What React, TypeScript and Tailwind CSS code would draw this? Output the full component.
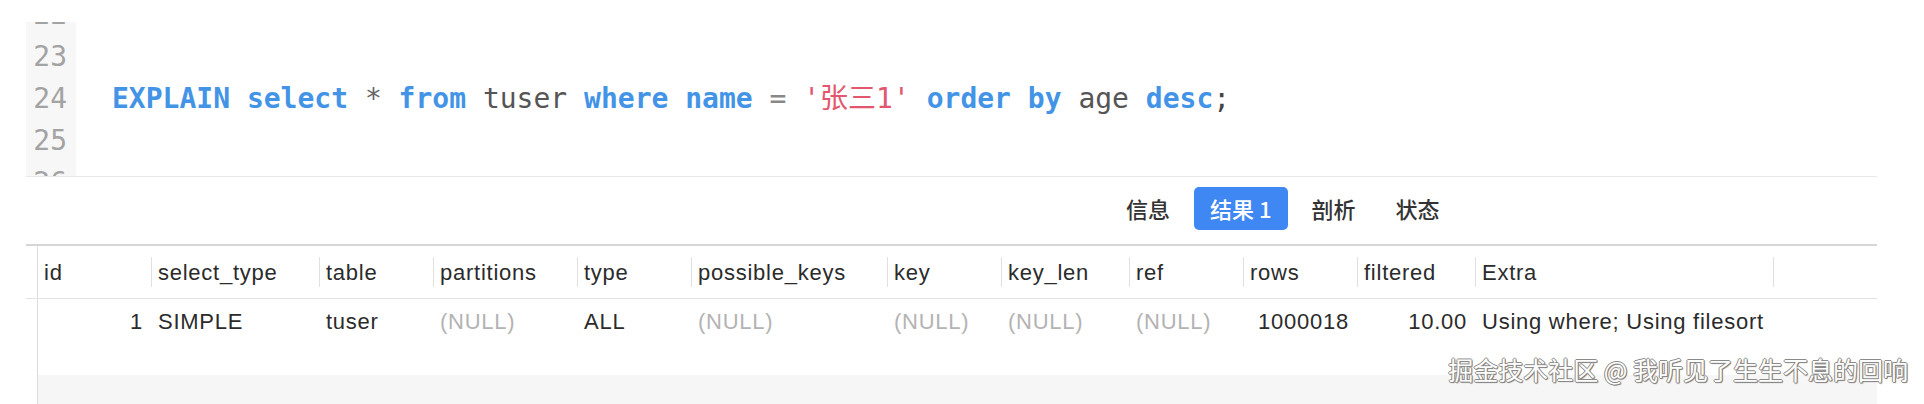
import React from 'react'

const mono = { fontFamily: '"DejaVu Sans Mono", "Noto Sans CJK SC", monospace' }

const columns = [
  { name: 'id', width: 'w-[113px]' },
  { name: 'select_type', width: 'w-[167px]' },
  { name: 'table', width: 'w-[113px]' },
  { name: 'partitions', width: 'w-[143px]' },
  { name: 'type', width: 'w-[113px]' },
  { name: 'possible_keys', width: 'w-[195px]' },
  { name: 'key', width: 'w-[113px]' },
  { name: 'key_len', width: 'w-[127px]' },
  { name: 'ref', width: 'w-[113px]' },
  { name: 'rows', width: 'w-[113px]' },
  { name: 'filtered', width: 'w-[117px]' },
  { name: 'Extra', width: 'w-[297px]' },
]

// value, right aligned, null
const row: [string, boolean, boolean][] = [
  ['1', true, false],
  ['SIMPLE', false, false],
  ['tuser', false, false],
  ['(NULL)', false, true],
  ['ALL', false, false],
  ['(NULL)', false, true],
  ['(NULL)', false, true],
  ['(NULL)', false, true],
  ['(NULL)', false, true],
  ['1000018', true, false],
  ['10.00', true, false],
  ['Using where; Using filesort', false, false],
]

function Kw({ children }: { children: React.ReactNode }) {
  return <span className="font-bold text-[#4394e6]">{children}</span>
}

function Editor() {
  return (
    <div className="flex h-[155px] overflow-hidden border-b border-[#e8e8e8]">
      {/* gutter */}
      <div className="w-[50px] bg-[#f7f7f7] pr-[9px] text-right text-[28px] leading-[42px] text-[#a3a3a3]" style={mono}>
        <div className="-mt-[28px]">
          {[22, 23, 24, 25, 26].map((n) => (
            <div key={n} className="h-[42px]">{n}</div>
          ))}
        </div>
      </div>

      {/* code */}
      <div className="flex-1 pl-[36px] text-[28px] leading-[42px] whitespace-pre text-[#555]" style={mono}>
        <div className="-mt-[28px]">
          <div className="h-[42px]" />
          <div className="h-[42px]" />
          <div className="h-[42px]">
            <Kw>EXPLAIN</Kw> <Kw>select</Kw> <span className="text-[#666]">*</span> <Kw>from</Kw> tuser{' '}
            <Kw>where</Kw> <Kw>name</Kw> <span className="text-[#888]">=</span>{' '}
            <span className="text-[#e2566e]">'张三1'</span> <Kw>order</Kw> <Kw>by</Kw> age <Kw>desc</Kw>
            <span className="text-[#444]">;</span>
          </div>
          <div className="h-[42px]" />
          <div className="h-[42px]" />
        </div>
      </div>
    </div>
  )
}

function Tabs() {
  const tabs = ['信息', '结果 1', '剖析', '状态']
  return (
    <div
      className="flex h-[69px] gap-2 border-b-2 border-[#d6d6d6] pl-[1084px] pt-[10px]"
      style={{ fontFamily: '"Noto Sans CJK SC", sans-serif' }}
    >
      {tabs.map((t, i) => (
        <div
          key={t}
          className={
            i === 1
              ? 'flex h-[43px] items-center rounded-[5px] bg-[#3f87f2] px-4 text-[22px] font-medium text-white'
              : 'flex h-[43px] items-center px-4 text-[22px] font-medium text-[#333]'
          }
        >
          {t}
        </div>
      ))}
    </div>
  )
}

function ResultTable() {
  return (
    <div className="text-[22px] tracking-[0.75px] text-[#2b2b2b]" style={{ fontFamily: '"Liberation Sans", Arial, sans-serif' }}>
      {/* header */}
      <div className="flex h-[53px] border-b border-[#e3e3e3]">
        <div className="w-[11px]" />
        <div className="flex flex-1 items-center border-l border-[#dcdcdc]">
          {columns.map((c) => (
            <React.Fragment key={c.name}>
              <div className={`${c.width} pl-[6px]`}>{c.name}</div>
              <div className="h-[30px] w-px bg-[#e0e0e0]" />
            </React.Fragment>
          ))}
        </div>
      </div>

      {/* data row */}
      <div className="flex h-[44px]">
        <div className="w-[11px]" />
        <div className="flex flex-1 items-center border-l border-[#dcdcdc]">
          {columns.map((c, i) => {
            const [v, right, isNull] = row[i]
            return (
              <React.Fragment key={c.name}>
                <div
                  className={`${c.width} whitespace-nowrap ${right ? 'pr-[8px] text-right' : 'pl-[6px]'} ${
                    isNull ? 'text-[#b3b3b3]' : ''
                  }`}
                >
                  {v}
                </div>
                <div className="w-px" />
              </React.Fragment>
            )
          })}
        </div>
      </div>

      {/* empty grid area */}
      <div className="flex h-[32px]">
        <div className="w-[11px]" />
        <div className="flex-1 border-l border-[#dcdcdc]" />
      </div>
      <div className="flex h-[29px]">
        <div className="w-[11px]" />
        <div className="flex-1 border-l border-[#dcdcdc] bg-[#f6f6f6]" />
      </div>
    </div>
  )
}

export default function App() {
  return (
    <div className="relative h-[404px] w-[1924px] overflow-hidden bg-white pl-[26px] pt-[22px]">
      <div className="flex w-[1851px] flex-col">
        <Editor />
        <Tabs />
        <ResultTable />
      </div>

      {/* watermark */}
      <div
        className="absolute right-[16px] top-[350px] whitespace-pre text-[25px] leading-[38px] text-white [text-shadow:1px_0_0_#8a8a8a,-1px_0_0_#8a8a8a,0_1px_0_#8a8a8a,0_-1px_0_#8a8a8a,1px_1px_1px_#666]"
        style={{ fontFamily: '"Noto Sans CJK SC", sans-serif' }}
      >
        掘金技术社区 @ 我听见了生生不息的回响
      </div>
    </div>
  )
}
